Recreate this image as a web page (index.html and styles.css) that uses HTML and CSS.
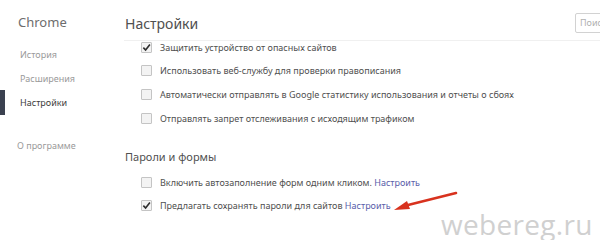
FILE: index.html
```html
<!DOCTYPE html>
<html lang="ru">
<head>
    <meta charset="UTF-8">
    <title>Настройки</title>
    <link rel="stylesheet" href="styles.css">
</head>
<body>
    <div class="page">
        <div class="sidebar">
            <div class="brand">Chrome</div>
            <div class="nav">
                <a href="#">История</a>
                <a href="#">Расширения</a>
                <a href="#" class="active">Настройки</a>
            </div>
            <a href="#" class="about">О программе</a>
        </div>

        <div class="main">
            <div class="header">
                <h1>Настройки</h1>
                <div class="search">Поиск</div>
            </div>

            <div class="rows">
                <div class="row">
                    <span class="box checked"><svg viewBox="0 0 10 10"><path d="M1.5 5.2 L4 7.8 L8.8 1.6" /></svg></span>
                    <span>Защитить устройство от опасных сайтов</span>
                </div>
                <div class="row">
                    <span class="box"></span>
                    <span>Использовать веб-службу для проверки правописания</span>
                </div>
                <div class="row">
                    <span class="box"></span>
                    <span>Автоматически отправлять в Google статистику использования и отчеты о сбоях</span>
                </div>
                <div class="row">
                    <span class="box"></span>
                    <span>Отправлять запрет отслеживания с исходящим трафиком</span>
                </div>
            </div>

            <h2>Пароли и формы</h2>

            <div class="rows">
                <div class="row">
                    <span class="box"></span>
                    <span>Включить автозаполнение форм одним кликом. <a href="#">Настроить</a></span>
                </div>
                <div class="row">
                    <span class="box checked"><svg viewBox="0 0 10 10"><path d="M1.5 5.2 L4 7.8 L8.8 1.6" /></svg></span>
                    <span>Предлагать сохранять пароли для сайтов <a href="#">Настроить</a></span>
                </div>
            </div>
        </div>
    </div>

    <!-- red pointer arrow and watermark lie over the page -->
    <svg class="arrow" viewBox="0 0 70 24" width="70" height="24">
        <path d="M66 2 L14 15" stroke="#d8321e" stroke-width="2.6" stroke-linecap="round" fill="none" />
        <path d="M4 19 L17 10 L20 18 Z" fill="#d8321e" />
    </svg>
    <div class="watermark">webereg.ru</div>
</body>
</html>
```

FILE: styles.css
```css
body {
    margin: 0;
    background-color: #fff;
    font-family: 'Noto Sans', 'Open Sans', sans-serif;
    color: #4a4a4a;
    overflow: hidden;
    width: 600px;
    height: 240px;
}
.page {
    display: flex;
}
.sidebar {
    width: 124px;
    flex-shrink: 0;
    display: flex;
    flex-direction: column;
}
.brand {
    font-size: 13px;
    line-height: 18px;
    color: #6d6d6d;
    padding: 13px 0 0 18px;
}
.nav {
    display: flex;
    flex-direction: column;
    margin-top: 12px;
}
.nav a {
    font-size: 9px;
    line-height: 13px;
    color: #9a9a9a;
    text-decoration: none;
    padding: 5px 0 5px 20px;
    margin-bottom: 0.5px;
}
.nav a.active {
    color: #3d3d3d;
    box-shadow: inset 5px 0 0 #3b4150;
    padding-top: 6px;
    padding-bottom: 6px;
}
.about {
    font-size: 9px;
    line-height: 13px;
    color: #9a9a9a;
    text-decoration: none;
    padding-left: 17px;
    margin-top: 23px;
}
.main {
    width: 505px;
    flex-shrink: 0;
}
.header {
    display: flex;
    align-items: flex-start;
    height: 40px;
    border-bottom: 1px solid #f0f0f0;
}
.header h1 {
    flex: 1;
    margin: 15px 0 0 1px;
    font-size: 14px;
    line-height: 18px;
    font-weight: normal;
    color: #505050;
}
.search {
    width: 48px;
    height: 18px;
    margin-top: 13px;
    border: 1px solid #d2d2d2;
    border-radius: 2px;
    font-size: 9px;
    line-height: 18px;
    color: #b0b0b0;
    padding-left: 4px;
}
.rows {
    display: flex;
    flex-direction: column;
    gap: 11.7px;
}
.row {
    display: flex;
    align-items: center;
    height: 12px;
    padding-left: 17px;
    font-size: 9px;
    color: #4f4f4f;
    white-space: nowrap;
}
.row a {
    color: #5a5eaa;
    text-decoration: none;
}
.box {
    width: 9px;
    height: 9px;
    border: 1px solid #c4c4c4;
    border-radius: 1px;
    background-color: #f3f3f3;
    margin-right: 8px;
    flex-shrink: 0;
    display: flex;
}
.box svg {
    width: 9px;
    height: 9px;
}
.box svg path {
    fill: none;
    stroke: #2e2e2e;
    stroke-width: 1.8;
}
h2 {
    margin: 26px 0 12px 1px;
    font-size: 11px;
    line-height: 14px;
    font-weight: normal;
    color: #505050;
}
.arrow {
    position: absolute;
    left: 390px;
    top: 191px;
}
.watermark {
    position: absolute;
    left: 441px;
    top: 207px;
    font-family: 'Open Sans', sans-serif;
    font-size: 28px;
    line-height: 34px;
    color: #d0d0d0;
    letter-spacing: 0.3px;
}
```
